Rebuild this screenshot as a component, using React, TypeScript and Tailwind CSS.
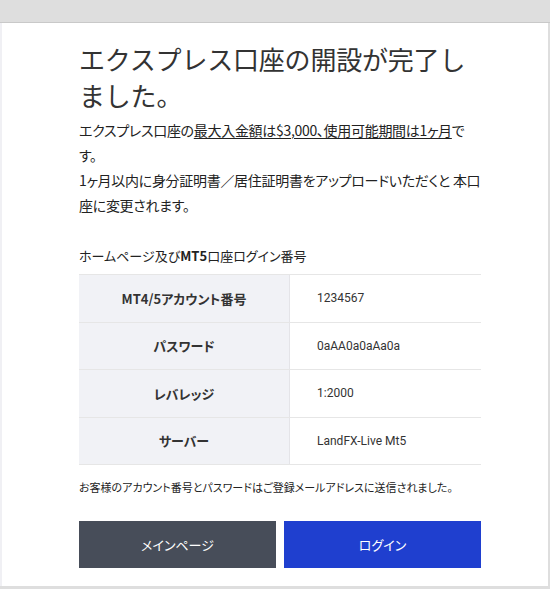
import React from "react";

const rows = [
  { label: "MT4/5アカウント番号", value: "1234567" },
  { label: "パスワード", value: "0aAA0a0aAa0a" },
  { label: "レバレッジ", value: "1:2000" },
  { label: "サーバー", value: "LandFX-Live Mt5" },
];

export default function App() {
  return (
    <div
      className="w-[550px] h-[589px] bg-[#dedede] flex flex-col overflow-hidden text-[#222]"
      style={{ fontFamily: '"Noto Sans CJK JP", "Noto Sans", sans-serif' }}
    >
      <div className="h-[23px] shrink-0 border-b border-[#c9c9c9]" />
      <div className="flex-1 ml-0 mr-[2px] mb-[3px] bg-white border-l-[2px] border-[#f0f0f4] pl-[77px] pr-[67px] pt-[18px]">
        <h1 className="text-[26px] leading-[36px] font-normal text-[#333] tracking-[-0.2px]">
          エクスプレス口座の開設が完了しました。
        </h1>
        <div className="mt-[5px] text-[14px] leading-[25px] text-[#222] tracking-[-0.3px] [font-feature-settings:'palt']">
          <p>
            エクスプレス口座の
            <span className="underline underline-offset-2">最大入金額は$3,000、使用可能期間は1ヶ月</span>
            です。
          </p>
          <p>1ヶ月以内に身分証明書／居住証明書をアップロードいただくと 本口座に変更されます。</p>
        </div>
        <p className="mt-[28px] text-[13px] leading-[20px] text-[#222] [font-feature-settings:'palt']">
          ホームページ及び<span className="font-bold">MT5</span>口座ログイン番号
        </p>
        <div className="mt-[8px] border-t border-[#e6e6e6]">
          {rows.map((r) => (
            <div key={r.label} className="flex h-[47.5px] border-b border-[#e6e6e6]">
              <div className="w-[211px] bg-[#f1f2f6] border-r border-[#e4e4e8] flex items-center justify-center text-[13px] font-bold text-[#333] [font-feature-settings:'palt']">
                {r.label}
              </div>
              <div
                className="flex-1 flex items-center pl-[27px] text-[12px] text-[#333]"
                style={{ fontFamily: 'Roboto, "Noto Sans CJK JP", sans-serif' }}
              >
                {r.value}
              </div>
            </div>
          ))}
        </div>
        <p className="mt-[14px] text-[11px] leading-[16px] text-[#222] [font-feature-settings:'palt']">
          お客様のアカウント番号とパスワードはご登録メールアドレスに送信されました。
        </p>
        <div className="mt-[26px] flex gap-[8px]">
          <button className="flex-1 h-[47px] bg-[#474d59] text-white text-[13px] [font-feature-settings:'palt']">
            メインページ
          </button>
          <button className="flex-1 h-[47px] bg-[#1f3fcf] text-white text-[13px] [font-feature-settings:'palt']">
            ログイン
          </button>
        </div>
      </div>
    </div>
  );
}
